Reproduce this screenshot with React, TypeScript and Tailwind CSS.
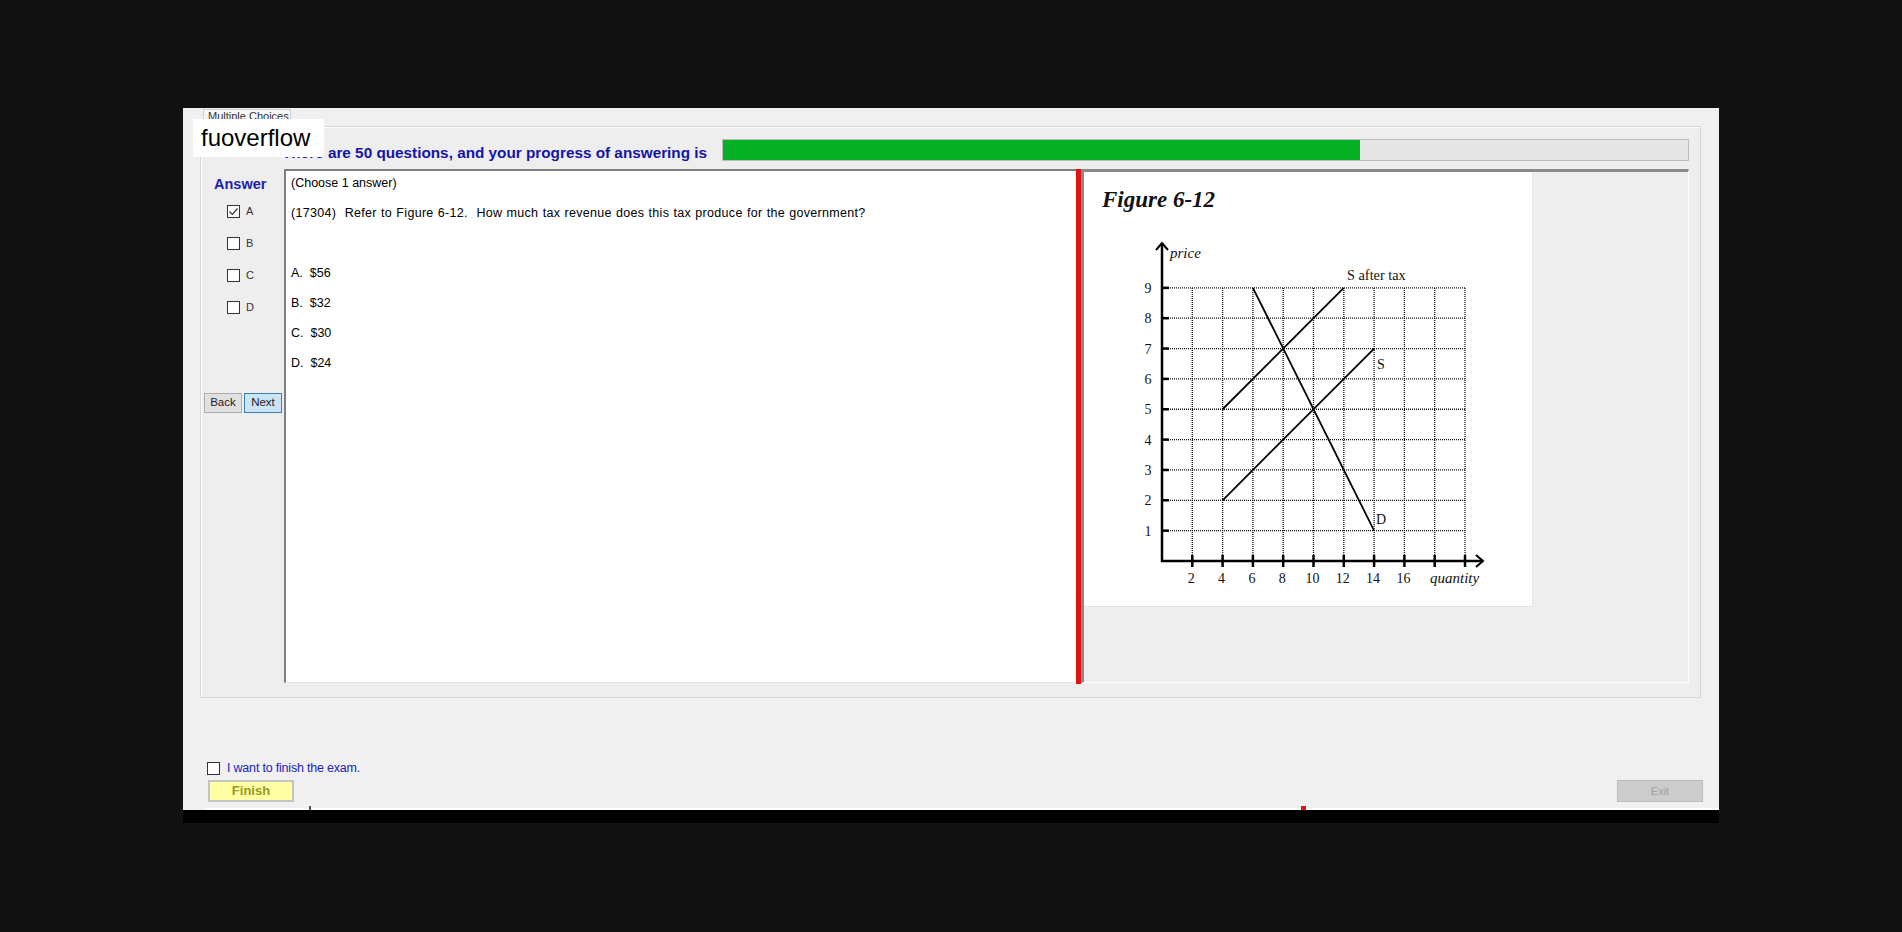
import React from "react";

const answers = ["A", "B", "C", "D"];
const choices = ["A.  $56", "B.  $32", "C.  $30", "D.  $24"];

const X = (q: number) => 78 + q * 15.15;
const Y = (p: number) => 348 - p * 30.35;

function CheckBox({ checked }: { checked?: boolean }) {
  return (
    <div className="w-[13px] h-[13px] border border-[#333] bg-white flex items-center justify-center shrink-0">
      {checked && (
        <svg width="11" height="11" viewBox="0 0 11 11">
          <path d="M1.5 5.5 L4.3 8.3 L9.5 2.5" fill="none" stroke="#333" strokeWidth="1.2" />
        </svg>
      )}
    </div>
  );
}

function Graph() {
  const xs = [2, 4, 6, 8, 10, 12, 14, 16, 18, 20];
  const ys = [1, 2, 3, 4, 5, 6, 7, 8, 9];
  const serif = "'Liberation Serif', serif";
  return (
    <svg width="449" height="394" viewBox="0 0 449 394" className="block">
      {/* dotted grid */}
      {xs.map((q) => (
        <line key={"v" + q} x1={X(q)} y1={Y(0)} x2={X(q)} y2={Y(9)} stroke="#111" strokeWidth="1.3" strokeDasharray="1 1" />
      ))}
      {ys.map((p) => (
        <line key={"h" + p} x1={X(0)} y1={Y(p)} x2={X(20)} y2={Y(p)} stroke="#111" strokeWidth="1.3" strokeDasharray="1 1" />
      ))}

      {/* axes */}
      <line x1={78} y1={349} x2={78} y2={30} stroke="#000" strokeWidth="2.5" />
      <path d="M72 37 L78 30 L84 37" fill="none" stroke="#000" strokeWidth="2" />
      <line x1={77} y1={348} x2={399} y2={348} stroke="#000" strokeWidth="2.5" />
      <path d="M392 342 L399 348 L392 354" fill="none" stroke="#000" strokeWidth="2" />

      {ys.map((p) => (
        <g key={"yt" + p}>
          <line x1={78} y1={Y(p)} x2={85} y2={Y(p)} stroke="#000" strokeWidth="2.5" />
          <text x={64} y={Y(p) + 5} textAnchor="middle" fontFamily={serif} fontSize="14" fill="#111">{p}</text>
        </g>
      ))}
      {xs.map((q) => (
        <line key={"xt" + q} x1={X(q)} y1={342} x2={X(q)} y2={354} stroke="#000" strokeWidth="2.5" />
      ))}
      {[2, 4, 6, 8, 10, 12, 14, 16].map((q) => (
        <text key={"xl" + q} x={X(q) - 1} y={370} textAnchor="middle" fontFamily={serif} fontSize="14" fill="#111">{q}</text>
      ))}

      <text x={86} y={45} fontFamily={serif} fontStyle="italic" fontSize="15" fill="#111">price</text>
      <text x={346} y={370} fontFamily={serif} fontStyle="italic" fontSize="15" fill="#111">quantity</text>
      <text x={263} y={67} fontFamily={serif} fontSize="14.3" fill="#111">S after tax</text>
      <text x={293} y={156} fontFamily={serif} fontSize="14" fill="#111">S</text>
      <text x={292} y={311} fontFamily={serif} fontSize="14" fill="#111">D</text>

      {/* curves */}
      <line x1={X(6)} y1={Y(9)} x2={X(14)} y2={Y(1)} stroke="#000" strokeWidth="1.8" />
      <line x1={X(4)} y1={Y(2)} x2={X(14)} y2={Y(7)} stroke="#000" strokeWidth="1.8" />
      <line x1={X(4)} y1={Y(5)} x2={X(12)} y2={Y(9)} stroke="#000" strokeWidth="1.8" />
    </svg>
  );
}

export default function App() {
  return (
    <div className="w-full h-[932px] bg-[#111111] pt-[108px] pl-[183px] font-['Liberation_Sans',Arial,sans-serif]">
      <div className="relative w-[1536px] h-[702px] bg-[#f0f0f0]">
        {/* watermark label */}
        <div className="absolute left-[10px] top-[11px] w-[131px] h-[38px] bg-white z-10 flex items-center pl-[8px] text-[24px] text-black">
          fuoverflow
        </div>

        {/* tab header */}
        <div className="h-[18px] pl-[20px] flex items-end">
          <div className="w-[88px] h-[17px] border border-b-0 border-[#d0d0d0] bg-[#f7f7f7] text-[11px] text-[#333] leading-[12px] pl-[4px] whitespace-nowrap">
            Multiple Choices
          </div>
        </div>

        {/* tab page */}
        <div className="ml-[17px] w-[1501px] h-[572px] border border-[#d6d6d6] bg-[#eeeeee] shadow-[inset_1px_1px_0_#ffffff] flex flex-col">
          <div className="h-[42px] flex items-start pl-[81px] pr-[11px]">
            <div className="mt-[17px] text-[15.3px] leading-[18px] font-bold text-[#1414a8] whitespace-nowrap">
              There are 50 questions, and your progress of answering is
            </div>
            <div className="ml-auto mt-[12px] w-[967px] h-[22px] border border-[#bcbcbc] bg-[#e6e6e6]">
              <div className="w-[637px] h-full bg-[#06b025]" />
            </div>
          </div>

          <div className="flex h-[514px]">
            {/* answer column */}
            <div className="w-[83px] flex flex-col">
              <div className="mt-[6px] pl-[13px] text-[14.5px] leading-[18px] font-bold text-[#1b22b0]">Answer</div>
              <div className="mt-[2px] flex flex-col">
                {answers.map((a, i) => (
                  <div key={a} className="h-[32px] flex items-center pl-[26px] gap-[6px]">
                    <CheckBox checked={i === 0} />
                    <span className="text-[11px] text-[#333]">{a}</span>
                  </div>
                ))}
              </div>
              <div className="mt-[70px] pl-[3px] flex gap-[2px]">
                <div className="w-[38px] h-[20px] border border-[#adadad] bg-[#e1e1e1] text-[11.5px] text-[#222] flex items-center justify-center">Back</div>
                <div className="w-[38px] h-[20px] border border-[#3c7fb1] bg-[#cce4f7] text-[11.5px] text-[#222] flex items-center justify-center">Next</div>
              </div>
            </div>

            {/* question box */}
            <div className="w-[792px] h-full bg-white border-l-2 border-t-2 border-[#7f7f7f] border-b border-b-[#e3e3e3] pl-[5px] flex flex-col gap-[6px] text-[12.5px] leading-[24px] text-black">
              <div>(Choose 1 answer)</div>
              <div className="whitespace-pre tracking-[0.3px] [word-spacing:0.5px]">(17304)  Refer to Figure 6-12.  How much tax revenue does this tax produce for the government?</div>
              <div className="h-[24px]" />
              {choices.map((c) => (
                <div key={c} className="whitespace-pre">{c}</div>
              ))}
            </div>

            {/* splitter */}
            <div className="w-[5px] h-[515px] bg-[#e31212]" />

            {/* figure area */}
            <div className="w-[608px] h-full border-l-[3px] border-t-[3px] border-[#8a8a8a] border-r border-r-white border-b border-b-white">
              <div className="w-[449px] h-[435px] bg-white border-r border-b border-[#e4e4e4]">
                <div className="pt-[15px] pl-[18px] h-[41px] text-[23px] leading-[26px] font-bold italic text-[#111] font-['Liberation_Serif',serif]">
                  Figure 6-12
                </div>
                <Graph />
              </div>
            </div>
          </div>
        </div>

        {/* bottom controls */}
        <div className="mt-[64px] pl-[24px] pr-[16px]">
          <div className="h-[12px] flex items-center gap-[7px]">
            <CheckBox />
            <span className="text-[12.5px] text-[#2222b8] tracking-[-0.2px]">I want to finish the exam.</span>
          </div>
          <div className="mt-[6px] flex justify-between">
            <div className="ml-[1px] w-[86px] h-[22px] border-2 border-[#c4c4c4] bg-[#ffffa6] text-[13px] font-bold text-[#9a9a22] flex items-center justify-center">Finish</div>
            <div className="w-[86px] h-[22px] border border-[#bdbdbd] bg-[#cccccc] text-[11px] text-[#a2a2a2] flex items-center justify-center">Exit</div>
          </div>
        </div>
        <div className="mt-[6px] ml-[22px] h-[2px] bg-white flex">
          <div className="ml-[104px] w-[2px] h-[4px] -mt-[2px] bg-[#555]" />
          <div className="ml-[990px] w-[5px] h-[4px] -mt-[2px] bg-[#e31212]" />
        </div>
      </div>
      <div className="w-[1536px] h-[13px] bg-black" />
    </div>
  );
}
